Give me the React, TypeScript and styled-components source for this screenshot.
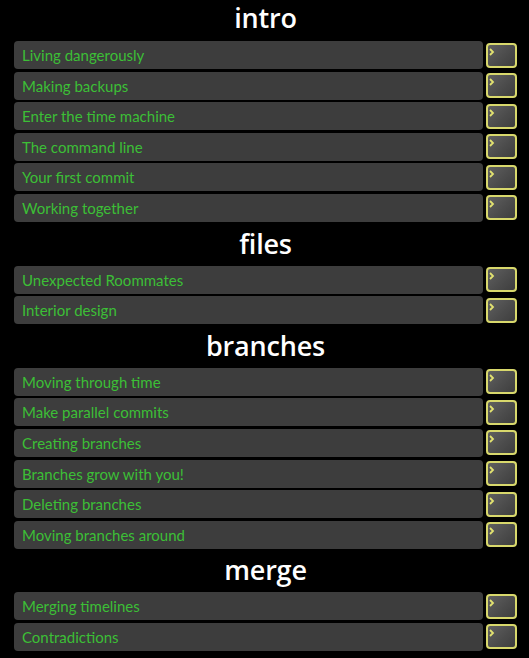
import React from "react";
import styled, { createGlobalStyle } from "styled-components";

const Global = createGlobalStyle`
  html, body { margin: 0; padding: 0; background: #000; }
  body { font-family: "Open Sans", "DejaVu Sans", sans-serif; }
`;

const Page = styled.div`
  padding: 0 12px 0 14px;
  background: #000;
  min-height: 658px;
  box-sizing: border-box;
`;

const Heading = styled.h2<{ $first?: boolean }>`
  margin: 0;
  height: 41px;
  display: flex;
  align-items: flex-end;
  justify-content: center;
  padding-bottom: ${(p) => (p.$first ? "10px" : "9px")};
  box-sizing: border-box;
  color: #fff;
  font-family: "Open Sans", sans-serif;
  font-weight: 600;
  font-size: 27px;
  line-height: 1;
  letter-spacing: -0.2px;
`;

const List = styled.div`
  display: flex;
  flex-direction: column;
`;

const Row = styled.div`
  display: grid;
  grid-template-columns: 1fr 31px;
  column-gap: 3px;
  align-items: center;
  height: 28px;
  margin-bottom: 2.6px;
`;

const Label = styled.div`
  height: 28px;
  background: #3d3d3d;
  border-radius: 4px;
  display: flex;
  align-items: center;
  padding-left: 8px;
  box-sizing: border-box;
  color: #3cbf36;
  font-family: "Lato", sans-serif;
  font-size: 15px;
`;

const Go = styled.button`
  position: relative;
  width: 31px;
  height: 25px;
  padding: 0;
  border: 2px solid #d8d86c;
  border-radius: 4px;
  background: linear-gradient(135deg, #606060 0%, #4c4c4c 55%, #3e3e3e 100%);
  box-sizing: border-box;
  cursor: pointer;
`;

const Chevron = styled.svg`
  position: absolute;
  left: 1px;
  top: 3px;
`;

const sections: { title: string; items: string[] }[] = [
  {
    title: "intro",
    items: [
      "Living dangerously",
      "Making backups",
      "Enter the time machine",
      "The command line",
      "Your first commit",
      "Working together",
    ],
  },
  { title: "files", items: ["Unexpected Roommates", "Interior design"] },
  {
    title: "branches",
    items: [
      "Moving through time",
      "Make parallel commits",
      "Creating branches",
      "Branches grow with you!",
      "Deleting branches",
      "Moving branches around",
    ],
  },
  { title: "merge", items: ["Merging timelines", "Contradictions"] },
];

export default function App() {
  return (
    <Page>
      <Global />
      {sections.map((s, i) => (
        <section key={s.title}>
          <Heading $first={i === 0}>{s.title}</Heading>
          <List>
            {s.items.map((it) => (
              <Row key={it}>
                <Label>{it}</Label>
                <Go aria-label={`Open ${it}`}>
                  <Chevron width="6" height="8" viewBox="0 0 6 8">
                    <polyline
                      points="1,1 4,4 1,7"
                      fill="none"
                      stroke="#e2e270"
                      strokeWidth="1.8"
                    />
                  </Chevron>
                </Go>
              </Row>
            ))}
          </List>
        </section>
      ))}
    </Page>
  );
}
